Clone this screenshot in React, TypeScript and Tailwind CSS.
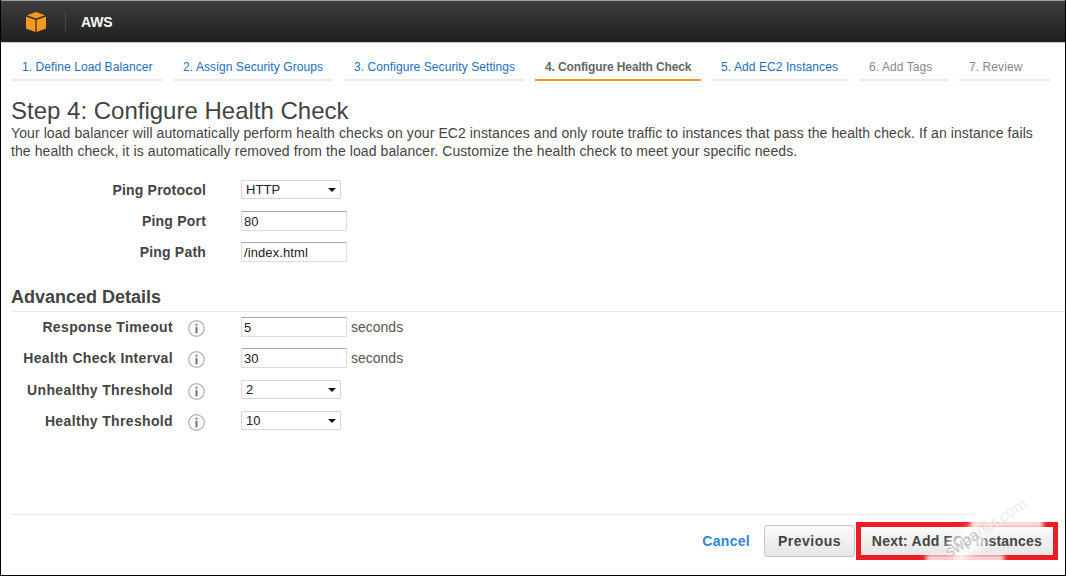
import { ReactNode } from "react";

const font = "font-['Liberation_Sans',Arial,sans-serif]";

const steps = [
  { label: "1. Define Load Balancer", width: "w-[152px] pl-[11px]", tone: "tracking-[0.08px] text-[#1a6fc0] border-[#ececec]" },
  { label: "2. Assign Security Groups", width: "w-[161px] pl-[10px]", tone: "tracking-[0.08px] text-[#1a6fc0] border-[#ececec]" },
  { label: "3. Configure Security Settings", width: "w-[181px] pl-[10px]", tone: "tracking-[0.08px] text-[#1a6fc0] border-[#ececec]" },
  { label: "4. Configure Health Check", width: "w-[166px] pl-[10px]", tone: "font-bold tracking-[-0.12px] text-[#666] border-[#f7981d]" },
  { label: "5. Add EC2 Instances", width: "w-[138px] pl-[10px]", tone: "tracking-[0.08px] text-[#1a6fc0] border-[#ececec]" },
  { label: "6. Add Tags", width: "w-[90px] pl-[10px]", tone: "tracking-[0.08px] text-[#888] border-[#ececec]" },
  { label: "7. Review", width: "w-[91px] pl-[10px]", tone: "tracking-[0.08px] text-[#888] border-[#ececec]" },
];

function CubeLogo() {
  return (
    <svg width="20" height="20" viewBox="0 0 20 20" className="shrink-0">
      <path d="M10 0 L19 3.2 L10 6.6 L1 3.2 Z" fill="#f7981d" />
      <path d="M0 4.6 L9.4 8 V20 L0 16.6 Z" fill="#f7981d" />
      <path d="M20 4.6 L10.6 8 V20 L20 16.6 Z" fill="#f7981d" />
    </svg>
  );
}

function InfoIcon() {
  return (
    <svg width="17" height="17" viewBox="0 0 17 17" className="shrink-0">
      <circle cx="8.5" cy="8.5" r="7.8" fill="#fafafa" stroke="#9a9a9a" />
      <rect x="7.6" y="3.8" width="1.8" height="1.8" fill="#666" />
      <rect x="7.6" y="7" width="1.8" height="6.4" fill="#666" />
    </svg>
  );
}

function Row({ label, info, children, className = "" }: { label: string; info?: boolean; children: ReactNode; className?: string }) {
  return (
    <div className={`flex h-[20px] items-center ${className}`}>
      <div className={info ? "w-[172px] text-right" : "w-[205px] text-right"}>
        <span className={`text-[14px] font-bold leading-[20px] text-[#444] ${info ? "tracking-[0.35px]" : "tracking-[0.2px]"}`}>
          {label}
        </span>
      </div>
      {info ? (
        <div className="ml-[15px] mr-[36px] mt-[3px]">
          <InfoIcon />
        </div>
      ) : (
        <div className="w-[35px]" />
      )}
      {children}
    </div>
  );
}

function TextBox({ value }: { value: string }) {
  return (
    <input
      readOnly
      value={value}
      className={`${font} h-[20px] w-[106px] rounded-[1px] border border-[#dcdce2] border-t-[#a9a9a9] bg-white px-[2px] text-[13px] tracking-[0.1px] text-[#222] outline-none`}
    />
  );
}

function SelectBox({ value }: { value: string }) {
  return (
    <div className="mb-[1px] flex h-[19px] w-[100px] items-center justify-between rounded-[1px] border border-[#d5d5dc] bg-white pl-[4px] pr-[4px] text-[13px] leading-none tracking-[0.1px] text-[#222]">
      <span>{value}</span>
      <span className="h-0 w-0 border-x-[4px] border-t-[4px] border-x-transparent border-t-[#111]" />
    </div>
  );
}

function Seconds() {
  return <span className="ml-[4px] text-[14px] leading-[20px] text-[#555]">seconds</span>;
}

export default function App() {
  return (
    <div className={`${font} flex h-[576px] w-[1066px] flex-col overflow-hidden border-b border-l border-r border-black bg-white`}>
      <header className="flex h-[43px] shrink-0 items-center border-t border-b border-t-[#9aa3a8] border-b-[#c9c9c9] bg-gradient-to-b from-[#3e3e3e] to-[#1f1f1f] pl-[25px] pt-[1px]">
        <CubeLogo />
        <div className="ml-[19px] h-[20px] w-px bg-[#484848]" />
        <span className="ml-[15px] mt-[1px] text-[14px] font-bold tracking-[-0.2px] text-white">AWS</span>
      </header>

      <nav className="ml-[10px] mt-[15px] flex gap-[10px]">
        {steps.map((s) => (
          <div
            key={s.label}
            className={`${s.width} ${s.tone} h-[23px] border-b-[2px] text-[12px] leading-[18px]`}
          >
            {s.label}
          </div>
        ))}
      </nav>

      <main className="mt-[16px] flex-1">
        <h1 className="ml-[10px] text-[24px] leading-[27px] text-[#444]">Step 4: Configure Health Check</h1>
        <p className="ml-[10px] mr-[26px] text-[14px] leading-[18px] tracking-[0.09px] text-[#444]">
          Your load balancer will automatically perform health checks on your EC2 instances and only route traffic to instances that pass the health check. If an instance fails the health check, it is automatically removed from the load balancer. Customize the health check to meet your specific needs.
        </p>

        <div className="mt-[20px] flex flex-col gap-[11px]">
          <Row label="Ping Protocol">
            <SelectBox value="HTTP" />
          </Row>
          <Row label="Ping Port">
            <TextBox value="80" />
          </Row>
          <Row label="Ping Path">
            <TextBox value="/index.html" />
          </Row>
        </div>

        <h2 className="ml-[10px] mt-[25px] border-b border-[#e8e8e8] pb-[3px] text-[18px] font-bold leading-[21px] text-[#444]">
          Advanced Details
        </h2>

        <div className="mt-[5px] flex flex-col gap-[11px]">
          <Row label="Response Timeout" info>
            <TextBox value="5" />
            <Seconds />
          </Row>
          <Row label="Health Check Interval" info>
            <TextBox value="30" />
            <Seconds />
          </Row>
          <Row label="Unhealthy Threshold" info className="mt-[1px]">
            <SelectBox value="2" />
          </Row>
          <Row label="Healthy Threshold" info>
            <SelectBox value="10" />
          </Row>
        </div>
      </main>

      <footer className="relative ml-[10px] h-[61px] shrink-0 border-t border-[#e8e8e8] pr-[7px] pt-[7px]">
        <div className="flex h-[38px] items-center justify-end">
          <a className="mr-[14px] text-[14px] font-bold tracking-[0.3px] text-[#2f86d8]">Cancel</a>
          <button className="mr-[1px] h-[32px] w-[91px] rounded-[3px] border border-[#c8c8c8] bg-gradient-to-b from-[#fafafa] to-[#e6e6e6] text-[14px] font-bold tracking-[0.5px] text-[#444]">
            Previous
          </button>
          <button className="h-[38px] w-[202px] border-[5px] border-[#ee1c25] bg-gradient-to-b from-[#fafafa] to-[#e6e6e6] text-[14px] font-bold tracking-[0.22px] text-[#444]">
            Next: Add EC2 Instances
          </button>
        </div>

        {/* watermark smeared over the corner */}
        <div className="absolute left-[963px] top-[-12px] h-[16px] w-[90px] bg-white blur-[1px]" />
        <div className="absolute left-[960px] top-[5px] h-[8px] w-[72px] bg-white/90 blur-[2px]" />
        <div className="absolute left-[915px] top-[40px] h-[7px] w-[78px] bg-white/90 blur-[2px]" />
        <div className="absolute left-[938px] top-[16px] h-[24px] w-[36px] rotate-[-33deg] bg-white/80 blur-[3px]" />
        <div className="absolute left-[946px] top-[58px] h-[3px] w-[84px] bg-white" />
        <span className="absolute left-[910px] top-[4px] w-[130px] rotate-[-33deg] text-center text-[16px] leading-[18px] text-[#ececec]">
          <span className="text-[#c4c4c4]">swpa</span>net.com
        </span>
      </footer>
    </div>
  );
}
